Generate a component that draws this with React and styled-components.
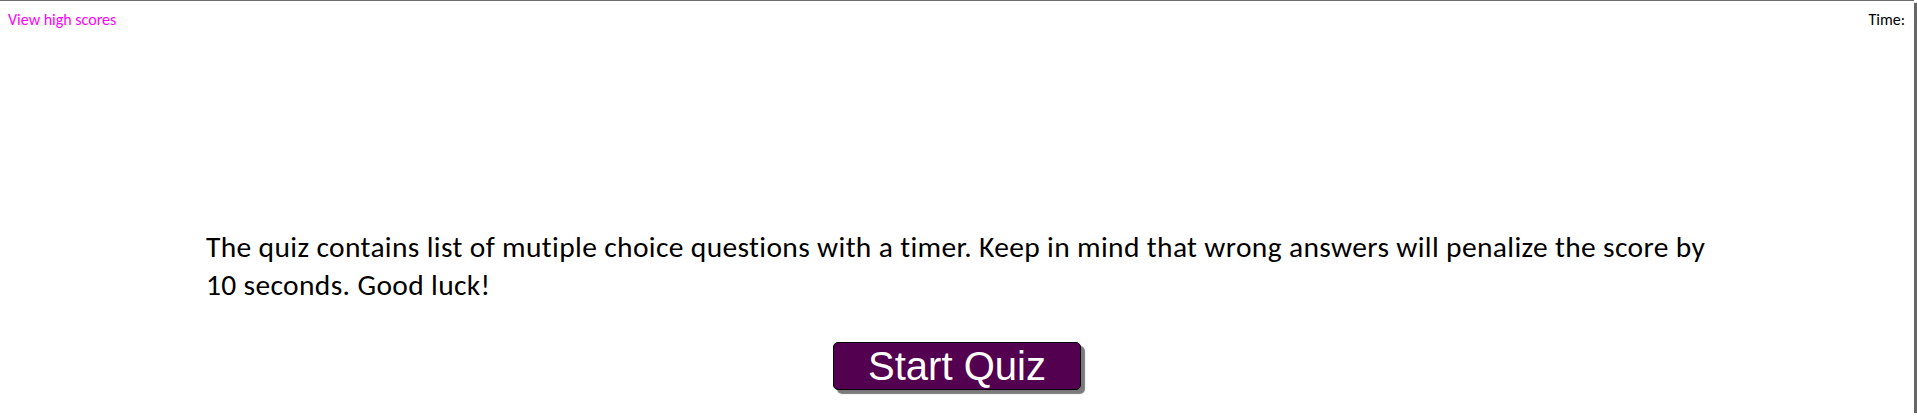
import React from "react";
import styled, { createGlobalStyle } from "styled-components";

const Global = createGlobalStyle`
  html, body { margin: 0; padding: 0; background: #fff; }
  body { font-family: Calibri, Carlito, Lato, "Open Sans", sans-serif; }
`;

const Frame = styled.div`
  box-sizing: border-box;
  width: 1914px;
  height: 413px;
  border-top: 1px solid #6e6e6e;
  box-shadow: 3px 3px 1px #666;
  display: flex;
  flex-direction: column;
`;

const Header = styled.header`
  display: flex;
  justify-content: space-between;
  align-items: flex-start;
  padding: 9px 9px 0 8px;
  font-size: 16px;
  line-height: 19px;
`;

const ScoresLink = styled.a`
  color: #ff00ff;
  text-decoration: none;
  cursor: pointer;
`;

const Timer = styled.div`
  color: #000;
`;

const Main = styled.main`
  width: 1502px;
  margin: 199px auto 0;
  display: flex;
  flex-direction: column;
  align-items: center;
`;

const Intro = styled.p`
  margin: 0;
  width: 100%;
  font-size: 29.5px;
  letter-spacing: 0.35px;
  line-height: 38px;
  color: #000;
`;

const StartButton = styled.button`
  margin-top: 38px;
  background: #52004f;
  color: #fff;
  font-family: Arial, "Liberation Sans", sans-serif;
  font-size: 40px;
  line-height: 46px;
  padding: 0 34px;
  border: 1px solid #000;
  border-radius: 5px;
  box-shadow: 4px 4px 1px #7a7a7a;
  cursor: pointer;
`;

export default function App() {
  return (
    <>
      <Global />
      <Frame>
        <Header>
          <ScoresLink>View high scores</ScoresLink>
          <Timer>Time:</Timer>
        </Header>
        <Main>
          <Intro>
            The quiz contains list of mutiple choice questions with a timer. Keep in mind that wrong answers will penalize the score by 10 seconds. Good luck!
          </Intro>
          <StartButton>Start Quiz</StartButton>
        </Main>
      </Frame>
    </>
  );
}
